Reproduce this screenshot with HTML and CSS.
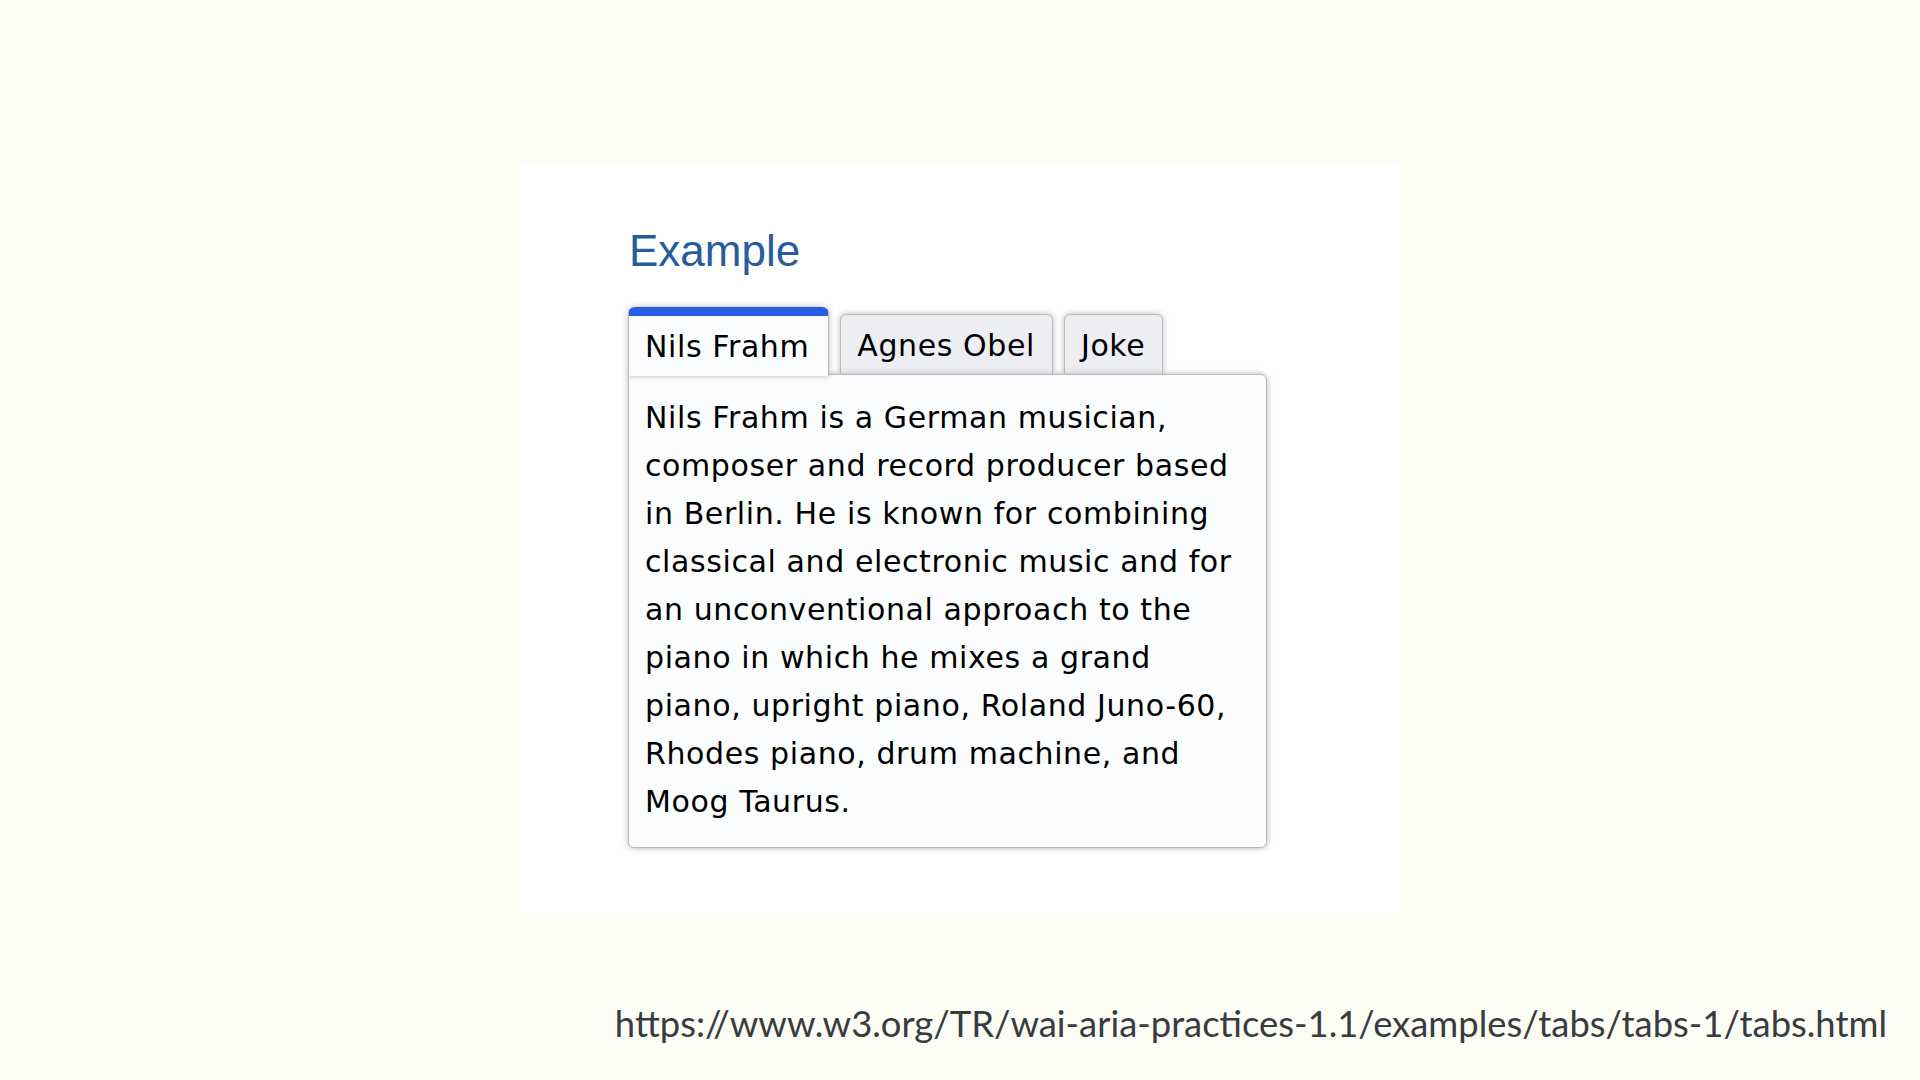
FILE: index.html
```html
<!DOCTYPE html>
<html lang="en">
<head>
<meta charset="utf-8">
<title>Tabs Example</title>
<link rel="stylesheet" href="styles.css">
</head>
<body>
<main class="stage">
  <section class="card">
    <h2 class="heading">Example</h2>
    <div class="tabs">
      <div class="tablist" role="tablist">
        <button class="tab tab-active" role="tab" aria-selected="true">Nils Frahm</button>
        <button class="tab" role="tab" aria-selected="false">Agnes Obel</button>
        <button class="tab" role="tab" aria-selected="false">Joke</button>
      </div>
      <div class="panel" role="tabpanel">
        <p>Nils Frahm is a German musician, composer and record producer based in Berlin. He is known for combining classical and electronic music and for an unconventional approach to the piano in which he mixes a grand piano, upright piano, Roland Juno-60, Rhodes piano, drum machine, and Moog Taurus.</p>
      </div>
    </div>
  </section>
  <footer class="source">https://www.w3.org/TR/wai-aria-practices-1.1/examples/tabs/tabs-1/tabs.html</footer>
</main>
</body>
</html>
```
FILE: styles.css
```css
html, body {
  margin: 0;
  padding: 0;
}
body {
  background: #fbfcf4;
  width: 1920px;
  height: 1080px;
  overflow: hidden;
}
.stage {
  display: flex;
  flex-direction: column;
  padding-top: 164px;
}
.card {
  box-sizing: border-box;
  margin-left: 520px;
  width: 880px;
  height: 749px;
  background: #ffffff;
  padding: 61px 0 0 108px;
}
.heading {
  margin: 0 0 31px 0;
  font-family: "Liberation Sans", Arial, sans-serif;
  font-weight: normal;
  font-size: 44px;
  line-height: 51px;
  color: #285d9c;
  padding-left: 1px;
}
.tabs {
  font-family: "DejaVu Sans", "Lucida Grande", sans-serif;
  font-size: 30px;
  letter-spacing: 0.6px;
  width: 639px;
}
.tablist {
  display: flex;
  align-items: flex-end;
  gap: 11px;
}
.tab {
  box-sizing: border-box;
  height: 61px;
  margin: 0;
  padding: 2px 17px 0 16px;
  font-family: inherit;
  font-size: inherit;
  letter-spacing: inherit;
  line-height: 36px;
  color: #000;
  background: #eceef2;
  border: 1px solid #b7b8b8;
  border-radius: 6px 6px 0 0;
  box-shadow: 0 0 6px #b7b8b8;
  white-space: nowrap;
}
.tab-active {
  position: relative;
  z-index: 2;
  height: 69px;
  padding-top: 2px;
  padding-right: 19px;
  border-top: 9px solid #2a5be3;
  border-bottom: 0;
  border-radius: 7px 7px 0 0;
  background: #fbfcfd;
  margin-bottom: -1px;
}
.panel {
  position: relative;
  z-index: 1;
  box-sizing: border-box;
  margin-top: -1px;
  padding: 19px 16px 21px 16px;
  border: 1px solid #b7b8b8;
  border-radius: 0 6px 6px 6px;
  box-shadow: 0 0 6px #b7b8b8;
  background: #fbfcfd;
}
.panel p {
  margin: 0;
  line-height: 48px;
  color: #000;
}
.source {
  display: flex;
  justify-content: flex-end;
  padding-right: 33px;
  margin-top: 88px;
  font-family: Lato, "Open Sans", sans-serif;
  font-size: 36.4px;
  line-height: 44px;
  color: #3a3b40;
}
```
